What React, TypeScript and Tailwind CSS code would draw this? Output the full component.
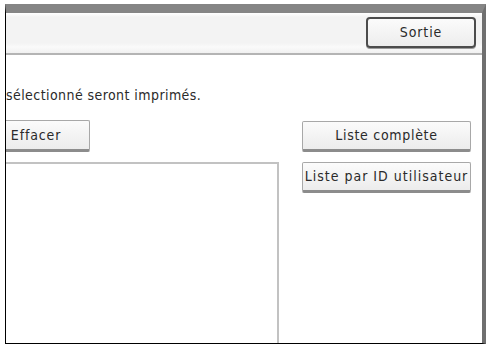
const font = "font-['DejaVu_Sans_Condensed','DejaVu_Sans',sans-serif]";

function PanelButton({
  label,
  className = "",
}: {
  label: string;
  className?: string;
}) {
  return (
    <div
      className={`flex items-center justify-center whitespace-nowrap rounded-[2px] border border-[#a8a8a8] border-b-[3px] border-b-[#8c8c8c] bg-gradient-to-b from-[#fbfbfb] to-[#ececec] text-[14px] text-[#2a2a2a] ${className}`}
    >
      {label}
    </div>
  );
}

export default function App() {
  return (
    <div className={`h-[345px] w-[490px] overflow-hidden bg-white pl-[5px] pt-[4px] ${font}`}>
      <div className="flex h-[340px] w-[481px] flex-col overflow-hidden border-b border-l border-r-4 border-t-[9px] border-b-black border-l-black border-r-[#6f6f6f] border-t-[#858585]">
        {/* header strip */}
        <div className="flex h-[42px] shrink-0 justify-end border-b-2 border-b-[#b4b4b4] bg-[linear-gradient(#ffffff_0px,#f3f3f3_4px,#f3f3f3_30px,#fafafa_34px,#f1f1f1_40px)] pr-[6px] pt-[4px]">
          <div className="flex h-[31px] w-[110px] items-center justify-center rounded-[4px] border-2 border-[#4c4c4c] bg-gradient-to-b from-[#fbfbfb] to-[#ededed] text-[14px] tracking-[0.9px] text-[#2a2a2a] shadow-[0_1px_0_#9a9a9a]">
            Sortie
          </div>
        </div>

        <p className="mt-[31px] h-[18px] whitespace-nowrap text-[14px] leading-[18px] tracking-[0.43px] text-[#2a2a2a]">
          sélectionné seront imprimés.
        </p>

        <div className="mt-[16px] flex flex-1">
          <div className="flex w-[273px] flex-col">
            <PanelButton label="Effacer" className="ml-[-24px] h-[32px] w-[108px] tracking-[0.85px]" />
            <div className="mt-[10px] flex-1 border-r-2 border-t-2 border-[#c2c2c2]" />
          </div>
          <div className="ml-[23px] flex w-[169px] flex-col">
            <PanelButton label="Liste complète" className="mt-px h-[31px] tracking-[0.7px]" />
            <PanelButton label="Liste par ID utilisateur" className="mt-[10px] h-[31px] tracking-[1px]" />
          </div>
        </div>
      </div>
    </div>
  );
}
